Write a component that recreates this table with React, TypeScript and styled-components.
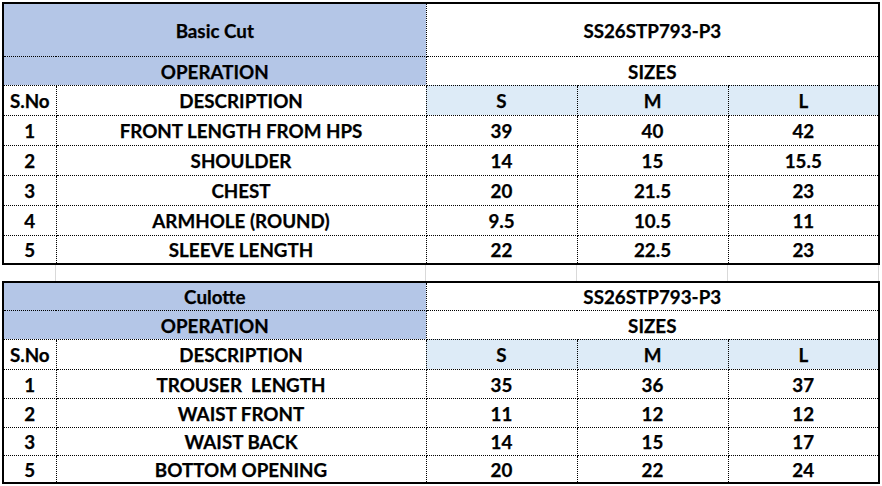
import React from 'react';
import styled, { createGlobalStyle } from 'styled-components';

const GlobalStyle = createGlobalStyle`
  body {
    margin: 0;
    background: #fff;
    font-family: Lato, "Liberation Sans", sans-serif;
  }
`;

const Sheet = styled.div`
  padding: 2px 0 0 2px;
  width: 877px;
`;

const Table = styled.table`
  border-collapse: collapse;
  table-layout: fixed;
  width: 877px;
  border: 2px solid #000;
`;

const Row = styled.tr<{ $h: number }>`
  height: ${(p) => p.$h}px;
`;

const Cell = styled.td<{ $bg?: string }>`
  border: 1px dotted #000;
  padding: 3px 0 0;
  text-align: center;
  vertical-align: middle;
  font-weight: 700;
  font-size: 18.8px;
  line-height: 1;
  color: #000;
  white-space: pre;
  -webkit-text-stroke: 0.25px #000;
  background: ${(p) => p.$bg ?? '#fff'};
`;

const Gap = styled.div`
  display: grid;
  grid-template-columns: 54px 370px 151px 151px 151px;
  height: 16px;

  & > span {
    border-right: 1px solid #d9d9d9;
  }
`;

const BLUE = '#b4c6e7';
const LIGHT = '#ddebf7';

interface Spec {
  title: string;
  style: string;
  heights: number[];
  rows: [string, string, string, string, string][];
}

const basic: Spec = {
  title: 'Basic Cut',
  style: 'SS26STP793-P3',
  heights: [53, 29, 30, 30, 30, 30, 30, 29],
  rows: [
    ['1', 'FRONT LENGTH FROM HPS', '39', '40', '42'],
    ['2', 'SHOULDER', '14', '15', '15.5'],
    ['3', 'CHEST', '20', '21.5', '23'],
    ['4', 'ARMHOLE (ROUND)', '9.5', '10.5', '11'],
    ['5', 'SLEEVE LENGTH', '22', '22.5', '23'],
  ],
};

const culotte: Spec = {
  title: 'Culotte',
  style: 'SS26STP793-P3',
  heights: [28, 29, 30, 29, 29, 28, 28],
  rows: [
    ['1', 'TROUSER  LENGTH', '35', '36', '37'],
    ['2', 'WAIST FRONT', '11', '12', '12'],
    ['3', 'WAIST BACK', '14', '15', '17'],
    ['5', 'BOTTOM OPENING', '20', '22', '24'],
  ],
};

const SpecTable: React.FC<{ spec: Spec }> = ({ spec }) => (
  <Table>
    <colgroup>
      <col style={{ width: 53 }} />
      <col style={{ width: 370 }} />
      <col style={{ width: 151 }} />
      <col style={{ width: 151 }} />
      <col style={{ width: 151 }} />
    </colgroup>
    <tbody>
      <Row $h={spec.heights[0]}>
        <Cell colSpan={2} $bg={BLUE}>{spec.title}</Cell>
        <Cell colSpan={3}>{spec.style}</Cell>
      </Row>
      <Row $h={spec.heights[1]}>
        <Cell colSpan={2} $bg={BLUE}>OPERATION</Cell>
        <Cell colSpan={3}>SIZES</Cell>
      </Row>
      <Row $h={spec.heights[2]}>
        <Cell>S.No</Cell>
        <Cell>DESCRIPTION</Cell>
        <Cell $bg={LIGHT}>S</Cell>
        <Cell $bg={LIGHT}>M</Cell>
        <Cell $bg={LIGHT}>L</Cell>
      </Row>
      {spec.rows.map((r, i) => (
        <Row key={i} $h={spec.heights[i + 3]}>
          {r.map((v, j) => (
            <Cell key={j}>{v}</Cell>
          ))}
        </Row>
      ))}
    </tbody>
  </Table>
);

export default function App() {
  return (
    <>
      <GlobalStyle />
      <Sheet>
        <SpecTable spec={basic} />
        <Gap>
          <span />
          <span />
          <span />
          <span />
          <span />
        </Gap>
        <SpecTable spec={culotte} />
      </Sheet>
    </>
  );
}
